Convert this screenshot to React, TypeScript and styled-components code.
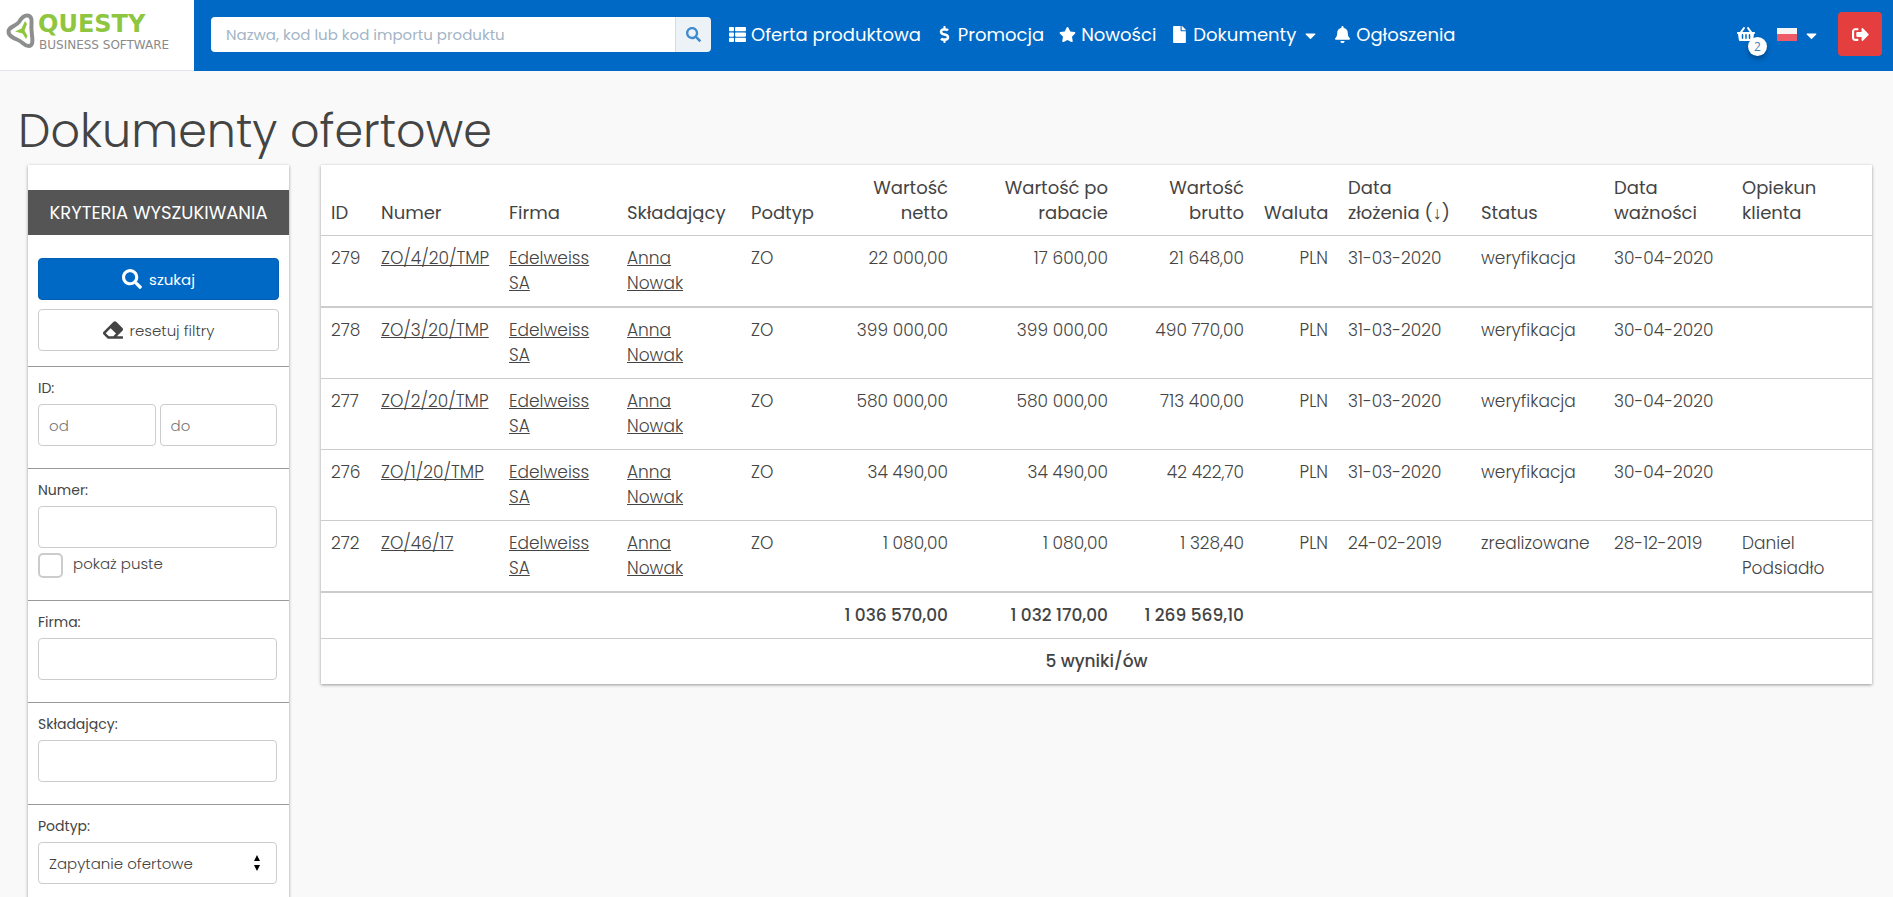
import React from "react";
import styled, { createGlobalStyle } from "styled-components";
import {
  FaThList,
  FaDollarSign,
  FaStar,
  FaFile,
  FaBell,
  FaShoppingBasket,
  FaSignOutAlt,
  FaSearch,
  FaEraser,
  FaCaretDown,
} from "react-icons/fa";

const blue = "#0069c5";
const ink = "#444";
const line = "#ccc";

const GlobalStyle = createGlobalStyle`
  *, *::before, *::after { box-sizing: border-box; }
  body {
    margin: 0;
    background: #f9f9f9;
    color: ${ink};
    font-family: Poppins, "Liberation Sans", sans-serif;
    font-size: 17px;
    font-weight: 300;
    line-height: 25px;
  }
  input, button, select { font: inherit; color: inherit; }
`;

const TopBar = styled.header`
  display: flex;
  height: 71px;
  background: ${blue};
  color: #fff;
`;

const BarContent = styled.div`
  display: flex;
  flex: 1;
  align-items: center;
  padding: 0 11px 3px 17px;
`;

const LogoLink = styled.a`
  display: flex;
  flex: none;
  align-items: flex-start;
  gap: 3px;
  width: 194px;
  padding: 10px 0 0 6px;
  border-bottom: 1px solid #e4e4ee;
  background: #fff;
  text-decoration: none;
  svg { margin-top: 3px; }
`;

const LogoWords = styled.span`
  display: flex;
  flex-direction: column;
  font-family: "DejaVu Sans", sans-serif;
`;

const LogoName = styled.span`
  color: #8fc640;
  font-size: 24px;
  font-weight: 700;
  line-height: 28px;
`;

const LogoTagline = styled.span`
  padding-left: 1px;
  color: #8a8a8a;
  font-size: 12px;
  font-weight: 400;
  line-height: 14px;
  white-space: nowrap;
`;

const SearchForm = styled.form`
  display: flex;
  flex: none;
  width: 500px;
  height: 35px;
  margin-right: 18px;
  border-radius: 4px;
  overflow: hidden;
`;

const SearchInput = styled.input`
  flex: 1;
  min-width: 0;
  padding: 0 15px;
  border: 0;
  background: #fff;
  color: ${ink};
  font-size: 15px;
  font-weight: 400;
  &::placeholder { color: #a3b5c6; opacity: 1; }
`;

const SearchButton = styled.button`
  display: flex;
  align-items: center;
  justify-content: center;
  width: 36px;
  padding: 0;
  border: 0;
  border-left: 1px solid #d5dde4;
  background: #ecf2f6;
  color: #3f8bd0;
  font-size: 15px;
`;

const Nav = styled.nav`
  display: flex;
  flex: 1;
  gap: 15px;
`;

const NavLink = styled.a`
  display: flex;
  align-items: center;
  gap: 5px;
  color: #fff;
  font-size: 18px;
  font-weight: 400;
  text-decoration: none;
  white-space: nowrap;
  svg { font-size: 17px; }
`;

const Caret = styled(FaCaretDown)`
  margin: 2px 0 0 1px;
`;

const Tools = styled.div`
  display: flex;
  align-items: center;
`;

const CartLink = styled.a`
  position: relative;
  display: flex;
  color: #fff;
  font-size: 18px;
`;

const CartBadge = styled.span`
  position: absolute;
  top: 12px;
  left: 11px;
  width: 19px;
  height: 19px;
  border-radius: 50%;
  background: #fff;
  box-shadow: 0 3px 5px rgba(0, 0, 0, 0.3);
  color: #3f7fb8;
  font-family: "Open Sans", sans-serif;
  font-size: 12px;
  font-weight: 400;
  line-height: 19px;
  text-align: center;
`;

const LanguageButton = styled.button`
  display: flex;
  align-items: center;
  gap: 5px;
  margin: 0 18px 0 22px;
  padding: 0;
  border: 0;
  background: none;
  color: #fff;
`;

const Flag = styled.span`
  width: 20px;
  height: 13px;
  background: linear-gradient(#f4f4f4 50%, #ee5a68 50%);
`;

const LogoutButton = styled.button`
  display: flex;
  align-items: center;
  justify-content: center;
  width: 44px;
  height: 44px;
  padding: 0;
  border: 0;
  border-radius: 4px;
  background: #e53e3e;
  color: #fff;
`;

const PageTitle = styled.h1`
  margin: 0;
  padding: 32px 18px 6px;
  font-size: 46px;
  font-weight: 300;
  line-height: 56px;
`;

const Content = styled.main`
  display: flex;
  align-items: flex-start;
  gap: 32px;
  padding: 0 21px 0 28px;
`;

const Panel = styled.section`
  background: #fff;
  box-shadow: 0 1px 3px rgba(0, 0, 0, 0.4);
`;

const Sidebar = styled(Panel)`
  flex: none;
  width: 261px;
  padding-top: 25px;
  font-size: 15px;
`;

const SidebarTitle = styled.h2`
  margin: 0;
  background: #555;
  color: #fff;
  font-size: 18px;
  font-weight: 400;
  line-height: 45px;
  text-align: center;
  white-space: nowrap;
`;

const Actions = styled.div`
  display: flex;
  flex-direction: column;
  gap: 9px;
  padding: 23px 10px 15px;
`;

const ActionButton = styled.button<{ $primary?: boolean }>`
  display: flex;
  align-items: center;
  justify-content: center;
  gap: 7px;
  height: 42px;
  border: 1px solid ${(p) => (p.$primary ? "#005fb2" : line)};
  border-radius: 4px;
  background: ${(p) => (p.$primary ? blue : "#fff")};
  color: ${(p) => (p.$primary ? "#fff" : ink)};
  font-weight: ${(p) => (p.$primary ? 400 : 300)};
  svg { font-size: 20px; }
`;

const Filter = styled.div`
  padding: 10px 12px 22px 10px;
  border-top: 1px solid #999;
`;

const FilterLabel = styled.label`
  display: block;
  margin-bottom: 5px;
  font-size: 14px;
  font-weight: 400;
  line-height: 22px;
`;

const FieldRow = styled.div`
  display: flex;
  gap: 4px;
`;

const Field = styled.input`
  flex: 1;
  width: 100%;
  min-width: 0;
  height: 42px;
  padding: 0 10px;
  border: 1px solid ${line};
  border-radius: 4px;
  background: #fff;
  &::placeholder { color: #777; opacity: 1; }
`;

const CheckLabel = styled.label`
  display: flex;
  gap: 10px;
  margin-top: 5px;
  line-height: 22px;
`;

const CheckBox = styled.input`
  appearance: none;
  width: 25px;
  height: 25px;
  margin: 0;
  border: 2px solid ${line};
  border-radius: 5px;
  background: #fff;
  &:checked { background: ${blue}; }
`;

const SelectBox = styled.div`
  position: relative;
  display: flex;
`;

const Select = styled.select`
  appearance: none;
  flex: 1;
  height: 42px;
  padding: 0 10px;
  border: 1px solid ${line};
  border-radius: 4px;
  background: #fff;
`;

const SelectArrows = styled.svg`
  position: absolute;
  top: 12px;
  right: 17px;
  pointer-events: none;
`;

const TablePanel = styled(Panel)`
  flex: 1;
  min-width: 0;
`;

const Table = styled.table`
  width: 100%;
  border-collapse: separate;
  border-spacing: 0;
  table-layout: fixed;
`;

const Column = styled.col<{ $width: number }>`
  width: ${(p) => p.$width}px;
`;

const HeadCell = styled.th<{ $right?: boolean }>`
  padding: 10px;
  border-bottom: 1px solid ${line};
  font-size: 18px;
  font-weight: 400;
  text-align: ${(p) => (p.$right ? "right" : "left")};
  vertical-align: bottom;
`;

const Row = styled.tr<{ $thick?: boolean }>`
  > td { border-bottom: ${(p) => (p.$thick ? 2 : 1)}px solid ${line}; }
`;

const Cell = styled.td<{ $right?: boolean }>`
  padding: 10px;
  text-align: ${(p) => (p.$right ? "right" : "left")};
  vertical-align: top;
`;

const TotalCell = styled(Cell)`
  font-weight: 500;
  white-space: nowrap;
`;

const CountCell = styled.td`
  padding: 10px;
  font-weight: 500;
  text-align: center;
`;

const CellLink = styled.a`
  color: inherit;
  text-decoration: underline;
`;

const columns = [
  { title: "ID", width: 50 },
  { title: "Numer", width: 128 },
  { title: "Firma", width: 118 },
  { title: "Składający", width: 124 },
  { title: "Podtyp", width: 83 },
  { title: "Wartość netto", width: 134, right: true },
  { title: "Wartość po rabacie", width: 160, right: true },
  { title: "Wartość brutto", width: 136, right: true },
  { title: "Waluta", width: 84, right: true },
  { title: "Data złożenia (↓)", width: 133 },
  { title: "Status", width: 133 },
  { title: "Data ważności", width: 128 },
  { title: "Opiekun klienta", width: 140 },
];

const offers = [
  { id: "279", no: "ZO/4/20/TMP", net: "22 000,00", disc: "17 600,00", gross: "21 648,00", date: "31-03-2020", status: "weryfikacja", valid: "30-04-2020", keeper: "" },
  { id: "278", no: "ZO/3/20/TMP", net: "399 000,00", disc: "399 000,00", gross: "490 770,00", date: "31-03-2020", status: "weryfikacja", valid: "30-04-2020", keeper: "" },
  { id: "277", no: "ZO/2/20/TMP", net: "580 000,00", disc: "580 000,00", gross: "713 400,00", date: "31-03-2020", status: "weryfikacja", valid: "30-04-2020", keeper: "" },
  { id: "276", no: "ZO/1/20/TMP", net: "34 490,00", disc: "34 490,00", gross: "42 422,70", date: "31-03-2020", status: "weryfikacja", valid: "30-04-2020", keeper: "" },
  { id: "272", no: "ZO/46/17", net: "1 080,00", disc: "1 080,00", gross: "1 328,40", date: "24-02-2019", status: "zrealizowane", valid: "28-12-2019", keeper: "Daniel Podsiadło" },
];

function LogoMark() {
  return (
    <svg width="29" height="36" viewBox="0 0 29 36" aria-hidden="true">
      <path
        d="M13 9C16 4 18 2.500 21 2.500C25.500 2.500 26 7 25.500 11C25 15 25.500 18 26 22C26.500 27 27.500 33 22.500 33C18 33 17 29 12 27C7 25 2.500 23 2.500 18.500C2.500 13.500 10 13.500 13 9Z"
        fill="none"
        stroke="#8d8f8e"
        strokeWidth="4"
      />
      <path
        d="M19 8L21 11L18.500 17.500L21.500 23L20 26L16.500 20.500L9 18.500L15.500 15.500Z"
        fill="#8fc640"
      />
    </svg>
  );
}

export default function App() {
  return (
    <>
      <GlobalStyle />
      <TopBar>
        <LogoLink href="#">
          <LogoMark />
          <LogoWords>
            <LogoName>QUESTY</LogoName>
            <LogoTagline>BUSINESS SOFTWARE</LogoTagline>
          </LogoWords>
        </LogoLink>
        <BarContent>
          <SearchForm role="search">
            <SearchInput
              type="text"
              aria-label="Szukaj produktu"
              placeholder="Nazwa, kod lub kod importu produktu"
            />
            <SearchButton type="button" aria-label="Szukaj">
              <FaSearch />
            </SearchButton>
          </SearchForm>
          <Nav>
            <NavLink href="#"><FaThList />Oferta produktowa</NavLink>
            <NavLink href="#"><FaDollarSign />Promocja</NavLink>
            <NavLink href="#"><FaStar />Nowości</NavLink>
            <NavLink href="#"><FaFile />Dokumenty<Caret /></NavLink>
            <NavLink href="#"><FaBell />Ogłoszenia</NavLink>
          </Nav>
          <Tools>
            <CartLink href="#" aria-label="Koszyk">
              <FaShoppingBasket />
              <CartBadge>2</CartBadge>
            </CartLink>
            <LanguageButton type="button" aria-label="Język">
              <Flag />
              <Caret />
            </LanguageButton>
            <LogoutButton type="button" aria-label="Wyloguj">
              <FaSignOutAlt />
            </LogoutButton>
          </Tools>
        </BarContent>
      </TopBar>

      <PageTitle>Dokumenty ofertowe</PageTitle>

      <Content>
        <Sidebar>
          <SidebarTitle>KRYTERIA WYSZUKIWANIA</SidebarTitle>
          <Actions>
            <ActionButton type="button" $primary><FaSearch />szukaj</ActionButton>
            <ActionButton type="button"><FaEraser />resetuj filtry</ActionButton>
          </Actions>
          <Filter>
            <FilterLabel htmlFor="id-from">ID:</FilterLabel>
            <FieldRow>
              <Field id="id-from" placeholder="od" />
              <Field id="id-to" placeholder="do" aria-label="ID do" />
            </FieldRow>
          </Filter>
          <Filter>
            <FilterLabel htmlFor="number">Numer:</FilterLabel>
            <Field id="number" />
            <CheckLabel>
              <CheckBox type="checkbox" />
              pokaż puste
            </CheckLabel>
          </Filter>
          <Filter>
            <FilterLabel htmlFor="company">Firma:</FilterLabel>
            <Field id="company" />
          </Filter>
          <Filter>
            <FilterLabel htmlFor="author">Składający:</FilterLabel>
            <Field id="author" />
          </Filter>
          <Filter>
            <FilterLabel htmlFor="subtype">Podtyp:</FilterLabel>
            <SelectBox>
              <Select id="subtype">
                <option>Zapytanie ofertowe</option>
              </Select>
              <SelectArrows width="6" height="18" viewBox="0 0 6 18" aria-hidden="true">
                <path d="M3 1L6 7H0ZM0 11H6L3 17Z" fill="#000" />
              </SelectArrows>
            </SelectBox>
          </Filter>
        </Sidebar>

        <TablePanel>
          <Table>
            <colgroup>
              {columns.map((c) => <Column key={c.title} $width={c.width} />)}
            </colgroup>
            <thead>
              <tr>
                {columns.map((c) => (
                  <HeadCell key={c.title} $right={c.right} scope="col">{c.title}</HeadCell>
                ))}
              </tr>
            </thead>
            <tbody>
              {offers.map((o, i) => (
                <Row key={o.id} $thick={i === 0 || i === offers.length - 1}>
                  <Cell>{o.id}</Cell>
                  <Cell><CellLink href="#">{o.no}</CellLink></Cell>
                  <Cell><CellLink href="#">Edelweiss SA</CellLink></Cell>
                  <Cell><CellLink href="#">Anna Nowak</CellLink></Cell>
                  <Cell>ZO</Cell>
                  <Cell $right>{o.net}</Cell>
                  <Cell $right>{o.disc}</Cell>
                  <Cell $right>{o.gross}</Cell>
                  <Cell $right>PLN</Cell>
                  <Cell>{o.date}</Cell>
                  <Cell>{o.status}</Cell>
                  <Cell>{o.valid}</Cell>
                  <Cell>{o.keeper}</Cell>
                </Row>
              ))}
            </tbody>
            <tfoot>
              <Row>
                <TotalCell colSpan={5} />
                <TotalCell $right>1 036 570,00</TotalCell>
                <TotalCell $right>1 032 170,00</TotalCell>
                <TotalCell $right>1 269 569,10</TotalCell>
                <TotalCell colSpan={5} />
              </Row>
              <tr>
                <CountCell colSpan={13}>5 wyniki/ów</CountCell>
              </tr>
            </tfoot>
          </Table>
        </TablePanel>
      </Content>
    </>
  );
}
